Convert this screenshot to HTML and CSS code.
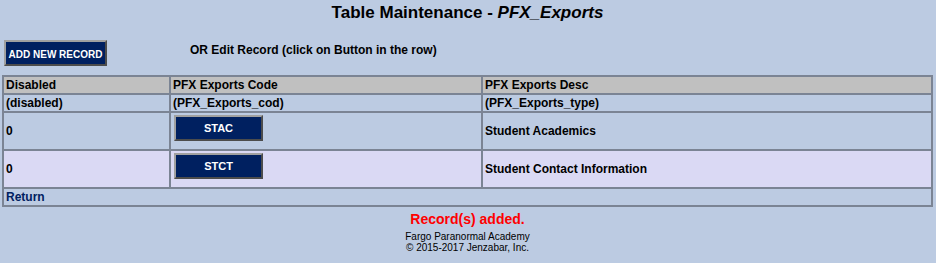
FILE: index.html
```html
<!DOCTYPE html>
<html lang="en">
<head>
  <meta charset="UTF-8" />
  <title>Table Maintenance - PFX_Exports</title>
  <link rel="stylesheet" href="styles.css">
</head>
<body>
  <h1>Table Maintenance - <i>PFX_Exports</i></h1>

  <div class="toolbar">
    <button class="nav-btn add-btn">ADD NEW RECORD</button>
    <span class="hint">OR Edit Record (click on Button in the row)</span>
  </div>

  <table class="maint">
    <tr class="head-row">
      <td class="col-a">Disabled</td>
      <td class="col-b">PFX Exports Code</td>
      <td>PFX Exports Desc</td>
    </tr>
    <tr>
      <td>(disabled)</td>
      <td>(PFX_Exports_cod)</td>
      <td>(PFX_Exports_type)</td>
    </tr>
    <tr class="data-row">
      <td>0</td>
      <td class="btn-cell"><button class="nav-btn row-btn">STAC</button></td>
      <td>Student Academics</td>
    </tr>
    <tr class="data-row alt">
      <td>0</td>
      <td class="btn-cell"><button class="nav-btn row-btn">STCT</button></td>
      <td>Student Contact Information</td>
    </tr>
    <tr>
      <td colspan="3"><a href="#" class="return-link">Return</a></td>
    </tr>
  </table>

  <p class="message">Record(s) added.</p>

  <div class="footer">
    Fargo Paranormal Academy<br>
    &copy; 2015-2017 Jenzabar, Inc.
  </div>
</body>
</html>
```

FILE: styles.css
```css
body {
  margin: 0;
  padding: 2px 3px 0 2px;
  background: #bccbe2;
  font-family: 'Liberation Sans', Arial, sans-serif;
  color: #000;
}

h1 {
  text-align: center;
  font-size: 17px;
  margin: 1px 0 0;
  line-height: 20px;
}

.toolbar {
  display: flex;
  align-items: center;
  margin-top: 16px;
  padding-left: 2px;
  height: 28px;
}

.hint {
  font-size: 12px;
  font-weight: bold;
  margin-left: 83px;
  margin-top: -6px;
}

.nav-btn {
  background: #002060;
  color: #fff;
  font-family: 'Liberation Sans', Arial, sans-serif;
  font-weight: bold;
  font-size: 11px;
  border: 2px outset #a0a0a0;
  cursor: pointer;
  white-space: nowrap;
}

.add-btn {
  height: 26px;
  width: 103px;
  padding: 2px 0 0;
  font-size: 10px;
}

table.maint {
  width: 100%;
  border-collapse: collapse;
  border: 2px solid #7b8494;
  margin-top: 8px;
  font-size: 12px;
  font-weight: bold;
}

table.maint td {
  border: 2px solid #7b8494;
  padding: 1px 2px;
  height: 13px;
  vertical-align: middle;
  text-align: left;
}

.col-a { width: 161px; }
.col-b { width: 306px; }

.head-row td {
  background: #c0c0c0;
}

.data-row td {
  height: 35px;
}

table.maint td.btn-cell {
  vertical-align: top;
  padding-top: 2px;
}

.data-row.alt td {
  background: #dad9f4;
}

.row-btn {
  display: block;
  width: 89px;
  height: 26px;
  margin: 0 0 7px 1px;
}

.return-link {
  color: #002060;
  text-decoration: none;
}

.message {
  text-align: center;
  color: #ff0000;
  font-weight: bold;
  font-size: 14px;
  margin: 4px 0 0;
}

.footer {
  text-align: center;
  font-size: 10px;
  line-height: 11px;
  margin-top: 4px;
}
```
